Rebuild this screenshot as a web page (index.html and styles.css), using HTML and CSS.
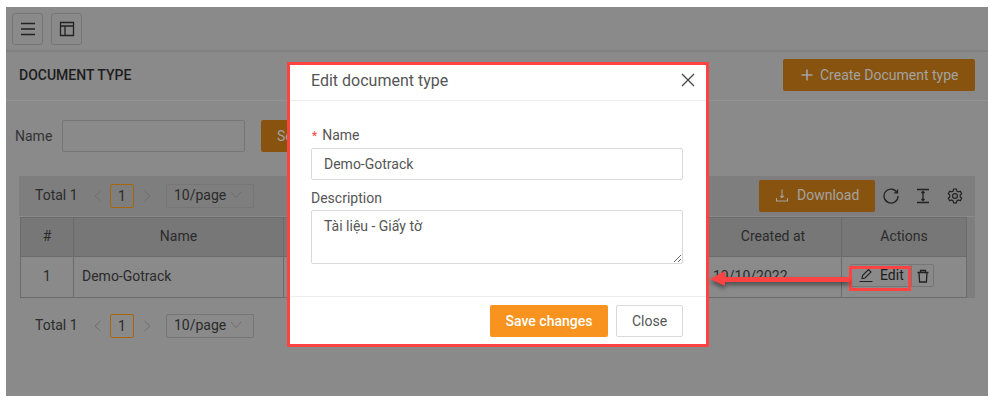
FILE: index.html
```html
<!DOCTYPE html>
<html lang="en">
<head>
  <meta charset="UTF-8">
  <meta name="viewport" content="width=device-width, initial-scale=1.0">
  <title>Document type</title>
  <link rel="stylesheet" href="styles.css">
</head>
<body>
  <div class="page">
    <div class="topbar">
      <button class="icon-btn">
        <svg width="16" height="16" viewBox="0 0 16 16" fill="none" stroke="#222" stroke-width="1.3"><path d="M1 2.500h14M1 8h14M1 13.500h14"/></svg>
      </button>
      <button class="icon-btn">
        <svg width="16" height="16" viewBox="0 0 16 16" fill="none" stroke="#222" stroke-width="1.3"><path d="M1.500 1.500h13v13h-13zM1.500 5h13M6 5v9.500"/></svg>
      </button>
    </div>

    <div class="heading">
      <h1>DOCUMENT TYPE</h1>
      <button class="btn-create">
        <svg width="14" height="14" viewBox="0 0 14 14" fill="none" stroke="#a3a3a3" stroke-width="1.600"><path d="M7 1.500v11M1.500 7h11"/></svg>
        Create Document type
      </button>
    </div>

    <div class="filter">
      <label>Name</label>
      <input class="filter-input" type="text">
      <button class="btn-search">Search</button>
    </div>

    <div class="tablebar">
      <div class="pager">
        <span class="total">Total 1</span>
        <span class="arrow">
          <svg width="10" height="12" viewBox="0 0 10 12" fill="none" stroke="#6f6f6f" stroke-width="1"><path d="M7.500 1 2 6l5.500 5"/></svg>
        </span>
        <span class="page-num">1</span>
        <span class="arrow">
          <svg width="10" height="12" viewBox="0 0 10 12" fill="none" stroke="#6f6f6f" stroke-width="1"><path d="M2.500 1 8 6l-5.500 5"/></svg>
        </span>
        <span class="size">10/page
          <svg width="12" height="8" viewBox="0 0 12 8" fill="none" stroke="#6f6f6f" stroke-width="1"><path d="m1 1 5 5.500L11 1"/></svg>
        </span>
      </div>
      <div class="tools">
        <button class="btn-download">
          <svg width="14" height="14" viewBox="0 0 14 14" fill="none" stroke="#a3a3a3" stroke-width="1.100"><path d="M7 1.500v8M5.200 8 7 9.500 8.800 8M1.500 10v3h11v-3"/></svg>
          Download
        </button>
        <svg class="tool" width="16" height="16" viewBox="0 0 16 16" fill="none" stroke="#222" stroke-width="1.300"><path d="M14 4.500A7 7 0 1 0 15 8M14.500 1.500v3.300h-3.300"/></svg>
        <svg class="tool" width="16" height="16" viewBox="0 0 16 16" fill="none" stroke="#222" stroke-width="1.300"><path d="M2 1.500h12M2 14.500h12M8 3.500v9M6.500 5 8 3.500 9.500 5M6.500 11 8 12.500 9.500 11"/></svg>
        <svg class="tool" width="16" height="16" viewBox="0 0 16 16" fill="none" stroke="#222" stroke-width="1.200"><path d="M6.600 1h2.800l.4 2 1.500.9 2-.7 1.400 2.400-1.500 1.400v1.900l1.500 1.300-1.400 2.500-2-.7-1.500.9-.4 2H6.600l-.4-2-1.500-.9-2 .7-1.400-2.500 1.500-1.300V7L1.300 5.600l1.400-2.400 2 .7 1.500-.9z"/><circle cx="8" cy="8" r="2.400"/></svg>
      </div>
    </div>

    <div class="table-wrap">
      <table>
        <thead>
          <tr>
            <th class="col-no">#</th>
            <th class="col-name">Name</th>
            <th>Description</th>
            <th class="col-date">Created at</th>
            <th class="col-act">Actions</th>
          </tr>
        </thead>
        <tbody>
          <tr>
            <td class="center">1</td>
            <td>Demo-Gotrack</td>
            <td>Tài liệu - Giấy tờ</td>
            <td>10/10/2022</td>
            <td>
              <div class="row-actions">
                <button class="btn-edit">
                  <svg width="14" height="14" viewBox="0 0 14 14" fill="none" stroke="#222" stroke-width="1.100"><path d="M0.500 13.500h13M3 10.500l.5-3L9.500 1.500l2.500 2.500-6 6z"/></svg>
                  Edit
                </button>
                <button class="btn-del">
                  <svg width="14" height="14" viewBox="0 0 14 14" fill="none" stroke="#222" stroke-width="1.300"><path d="M1.500 3.500h11M4.500 3.500V1.500h5v2M3 3.500l.6 9.500h6.800l.6-9.500"/></svg>
                </button>
              </div>
            </td>
          </tr>
        </tbody>
      </table>
    </div>

    <div class="pager pager-bottom">
      <span class="total">Total 1</span>
      <span class="arrow">
        <svg width="10" height="12" viewBox="0 0 10 12" fill="none" stroke="#6f6f6f" stroke-width="1"><path d="M7.500 1 2 6l5.500 5"/></svg>
      </span>
      <span class="page-num">1</span>
      <span class="arrow">
        <svg width="10" height="12" viewBox="0 0 10 12" fill="none" stroke="#6f6f6f" stroke-width="1"><path d="M2.500 1 8 6l-5.500 5"/></svg>
      </span>
      <span class="size">10/page
        <svg width="12" height="8" viewBox="0 0 12 8" fill="none" stroke="#6f6f6f" stroke-width="1"><path d="m1 1 5 5.500L11 1"/></svg>
      </span>
    </div>

    <div class="modal">
      <div class="modal-head">
        <span>Edit document type</span>
        <svg width="14" height="14" viewBox="0 0 14 14" fill="none" stroke="#444" stroke-width="1.300"><path d="m1 1 12 12M13 1 1 13"/></svg>
      </div>
      <div class="modal-body">
        <label class="field-label"><span class="req">*</span>Name</label>
        <input class="field" type="text" value="Demo-Gotrack">
        <label class="field-label second">Description</label>
        <textarea class="field area">Tài liệu - Giấy tờ</textarea>
      </div>
      <div class="modal-foot">
        <button class="btn-save">Save changes</button>
        <button class="btn-close">Close</button>
      </div>
    </div>

    <div class="highlight"></div>
    <svg class="callout" width="146" height="20" viewBox="0 0 146 20">
      <path d="M141 6H16V0L1 8l15 7v-4h125z" fill="#ff4343"/>
    </svg>
  </div>
</body>
</html>
```

FILE: styles.css
```css
* {
  box-sizing: border-box;
}

body {
  margin: 0;
  background-color: #fff;
  font-family: Roboto, "Liberation Sans", sans-serif;
  font-size: 14px;
  color: #2b2b2b;
}

button {
  font-family: inherit;
  font-size: 14px;
  padding: 0;
}

.page {
  position: relative;
  width: 982px;
  height: 389px;
  margin: 7px 0 0 6px;
  background-color: #8a8a8a;
  overflow: hidden;
}

.topbar {
  display: flex;
  gap: 8px;
  height: 45px;
  padding: 6px;
  border-bottom: 2px solid #808080;
}

.icon-btn {
  display: flex;
  align-items: center;
  justify-content: center;
  width: 31px;
  height: 32px;
  background: none;
  border: 1px solid #767676;
  border-radius: 3px;
}

.heading {
  display: flex;
  align-items: center;
  justify-content: space-between;
  height: 49px;
  padding: 0 13px 2px;
  border-bottom: 1px solid #939393;
}

h1 {
  margin: 0;
  font-size: 14px;
  font-weight: 500;
  color: #1d1d1d;
}

.btn-create {
  display: flex;
  align-items: center;
  gap: 6px;
  width: 192px;
  height: 32px;
  padding-left: 17px;
  background-color: #87530f;
  color: #a3a3a3;
  border: none;
  border-radius: 2px;
}

.filter {
  display: flex;
  align-items: center;
  height: 32px;
  margin: 19px 0 0 9px;
}

.filter label {
  width: 47px;
  color: #333;
}

.filter-input {
  width: 183px;
  height: 32px;
  background: none;
  border: 1px solid #767676;
  border-radius: 2px;
}

.btn-search {
  width: 70px;
  height: 32px;
  margin-left: 16px;
  text-align: left;
  padding-left: 16px;
  background-color: #87530f;
  color: #a3a3a3;
  border: none;
  border-radius: 2px;
}

.tablebar {
  display: flex;
  align-items: center;
  justify-content: space-between;
  width: 956px;
  height: 40px;
  margin: 24px 0 0 13px;
  padding-left: 16px;
  background-color: #7e7e7e;
}

.pager {
  display: flex;
  align-items: center;
  color: #2b2b2b;
}

.pager-bottom {
  margin: 16px 0 0 29px;
}

.total {
  width: 50px;
  margin-bottom: 2px;
}

.arrow {
  display: flex;
  justify-content: center;
  width: 25px;
}

.page-num {
  display: flex;
  align-items: center;
  justify-content: center;
  width: 24px;
  height: 24px;
  border: 1px solid #a8650f;
  border-radius: 2px;
}

.size {
  display: flex;
  align-items: center;
  justify-content: space-between;
  width: 88px;
  height: 24px;
  margin-left: 7px;
  padding: 0 11px 2px 7px;
  border: 1px solid #767676;
  border-radius: 2px;
}

.tools {
  display: flex;
  align-items: center;
}

.btn-download {
  display: flex;
  align-items: center;
  gap: 8px;
  width: 116px;
  height: 32px;
  margin-right: 8px;
  padding: 0 0 2px 16px;
  background-color: #87530f;
  color: #a3a3a3;
  border: none;
  border-radius: 2px;
}

.tool {
  margin-right: 16px;
}

.tool:last-child {
  margin-right: 12px;
}

.table-wrap {
  width: 956px;
  margin: 1px 0 0 13px;
  padding: 0 8px 0 1px;
  background: linear-gradient(#8a8a8a, #8a8a8a) left / 1px 100% no-repeat, #7e7e7e;
}

table {
  width: 947px;
  border-collapse: collapse;
  table-layout: fixed;
  background-color: #8a8a8a;
}

th, td {
  height: 41px;
  padding: 0 8px 3px;
  border: 1px solid #6b6b6b;
  font-weight: 400;
  white-space: nowrap;
  overflow: hidden;
}

th {
  background-color: #777;
  text-align: center;
  height: 39px;
  padding-bottom: 2px;
}

.center {
  text-align: center;
}

.col-no {
  width: 53px;
}

.col-name {
  width: 210px;
}

.col-date {
  width: 137px;
}

.col-act {
  width: 125px;
}

.row-actions {
  display: flex;
}

.btn-edit {
  display: flex;
  align-items: center;
  gap: 7px;
  width: 61px;
  height: 23px;
  padding: 0 0 1px 8px;
  background: none;
  color: #1d1d1d;
  border: 1px solid #767676;
  border-radius: 2px 0 0 2px;
}

.btn-del {
  display: flex;
  align-items: center;
  justify-content: center;
  width: 23px;
  height: 23px;
  background: none;
  border: 1px solid #767676;
  border-radius: 0 2px 2px 0;
}

.modal {
  position: absolute;
  left: 281px;
  top: 55px;
  display: flex;
  flex-direction: column;
  width: 422px;
  height: 285px;
  background-color: #fff;
  border: 3px solid #ff4343;
  color: #555;
}

.modal-head {
  display: flex;
  align-items: center;
  justify-content: space-between;
  height: 36px;
  padding: 0 11px 5px 21px;
  border-bottom: 1px solid #eee;
  font-size: 16px;
  flex-shrink: 0;
}

.modal-body {
  display: flex;
  flex-direction: column;
  flex: 1;
  padding: 26px 23px 0 21px;
}

.field-label {
  height: 21px;
  line-height: 16px;
}

.field-label.second {
  margin-top: 10px;
  height: 20px;
}

.req {
  margin: 0 5px 0 1px;
  color: #ff4343;
  font-size: 12px;
}

.field {
  width: 372px;
  height: 32px;
  padding: 0 12px;
  border: 1px solid #d9d9d9;
  border-radius: 2px;
  color: #555;
  font-family: inherit;
  font-size: 14px;
  flex-shrink: 0;
}

.area {
  height: 54px;
  padding-top: 7px;
}

.modal-foot {
  display: flex;
  justify-content: flex-end;
  gap: 8px;
  height: 48px;
  padding: 8px 23px 0 0;
  border-top: 1px solid #eee;
  flex-shrink: 0;
}

.btn-save {
  width: 118px;
  height: 32px;
  background-color: #f7931e;
  color: #fff;
  font-weight: 500;
  border: none;
  border-radius: 2px;
}

.btn-close {
  width: 67px;
  height: 32px;
  background-color: #fff;
  color: #555;
  border: 1px solid #d9d9d9;
  border-radius: 2px;
}

.highlight {
  position: absolute;
  left: 843px;
  top: 259px;
  width: 62px;
  height: 25px;
  border: 3px solid #ff4343;
}

.callout {
  position: absolute;
  left: 703px;
  top: 264px;
  filter: drop-shadow(0 3px 2px rgba(0, 0, 0, 0.45));
}
```
